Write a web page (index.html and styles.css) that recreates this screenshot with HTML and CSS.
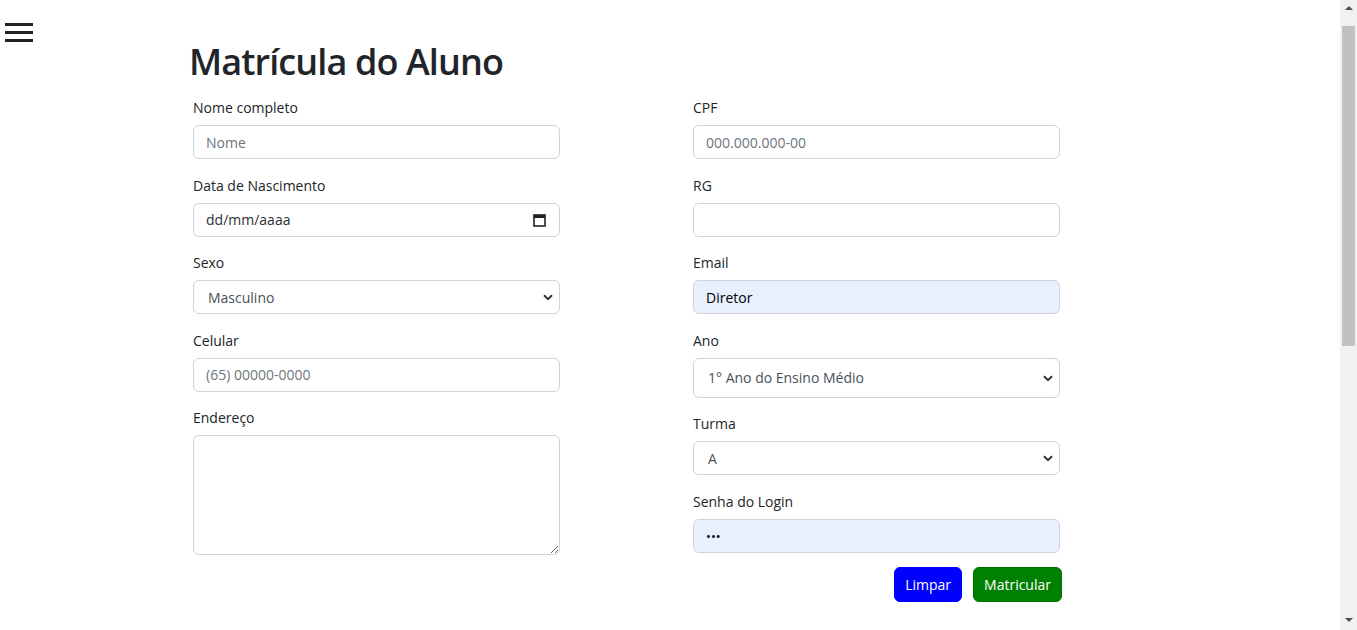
FILE: index.html
```html
<!DOCTYPE html>
<html lang="pt-BR">
<head>
<meta charset="utf-8">
<title>Matrícula do Aluno</title>
<link rel="stylesheet" href="styles.css">
</head>
<body>
<div class="page">
  <aside class="side">
    <button class="menu-btn" type="button" aria-label="Menu">
      <span class="bar"></span><span class="bar"></span><span class="bar"></span>
    </button>
  </aside>
  <main class="main">
    <h1 class="title">Matrícula do Aluno</h1>
    <form class="form">
      <div class="col">
        <div class="group">
          <label class="label">Nome completo</label>
          <input class="control" type="text" placeholder="Nome">
        </div>
        <div class="group">
          <label class="label">Data de Nascimento</label>
          <div class="field">
            <input class="control control-date" type="text" placeholder="dd/mm/aaaa">
            <svg class="cal-icon" width="13" height="14" viewBox="0 0 13 14"><rect x="1" y="2" width="11" height="11" fill="none" stroke="#222" stroke-width="1.6"/><rect x="1" y="2" width="11" height="3" fill="#222"/></svg>
          </div>
        </div>
        <div class="group">
          <label class="label">Sexo</label>
          <div class="field">
            <select class="control select"><option>Masculino</option><option>Feminino</option></select>
            <svg class="chev" width="10" height="7" viewBox="0 0 10 7"><path d="M1 1.2 L5 5.2 L9 1.2" fill="none" stroke="#333" stroke-width="2"/></svg>
          </div>
        </div>
        <div class="group">
          <label class="label">Celular</label>
          <input class="control" type="text" placeholder="(65) 00000-0000">
        </div>
        <div class="group">
          <label class="label">Endereço</label>
          <textarea class="control area"></textarea>
        </div>
      </div>
      <div class="col">
        <div class="group">
          <label class="label">CPF</label>
          <input class="control" type="text" placeholder="000.000.000-00">
        </div>
        <div class="group">
          <label class="label">RG</label>
          <input class="control" type="text">
        </div>
        <div class="group">
          <label class="label">Email</label>
          <input class="control filled" type="text" value="Diretor">
        </div>
        <div class="group">
          <label class="label">Ano</label>
          <div class="field">
            <select class="control select tall"><option>1° Ano do Ensino Médio</option><option>2° Ano do Ensino Médio</option><option>3° Ano do Ensino Médio</option></select>
            <svg class="chev" width="10" height="7" viewBox="0 0 10 7"><path d="M1 1.2 L5 5.2 L9 1.2" fill="none" stroke="#333" stroke-width="2"/></svg>
          </div>
        </div>
        <div class="group">
          <label class="label">Turma</label>
          <div class="field">
            <select class="control select"><option>A</option><option>B</option></select>
            <svg class="chev" width="10" height="7" viewBox="0 0 10 7"><path d="M1 1.2 L5 5.2 L9 1.2" fill="none" stroke="#333" stroke-width="2"/></svg>
          </div>
        </div>
        <div class="group last">
          <label class="label">Senha do Login</label>
          <input class="control filled pass" type="password" value="abc">
        </div>
        <div class="actions">
          <button class="btn btn-blue" type="reset">Limpar</button>
          <button class="btn btn-green" type="submit">Matricular</button>
        </div>
      </div>
    </form>
  </main>
</div>
<div class="scrollbar" aria-hidden="true">
  <div class="sb-arrow sb-up"></div>
  <div class="sb-track"><div class="sb-thumb"></div></div>
  <div class="sb-arrow sb-down"></div>
</div>
</body>
</html>
```

FILE: styles.css
```css
* { box-sizing: border-box; }

html, body {
  margin: 0;
  padding: 0;
  background: #fff;
}

body {
  font-family: "Open Sans", "Noto Sans", sans-serif;
  font-size: 14px;
  color: #212529;
}

.page {
  display: flex;
  align-items: flex-start;
  padding-right: 17px;
}

.side {
  width: 189px;
  flex: 0 0 189px;
  padding: 23px 0 0 5px;
}

.menu-btn {
  display: flex;
  flex-direction: column;
  gap: 5px;
  width: 28px;
  padding: 0;
  border: 0;
  background: none;
  cursor: pointer;
}

.bar {
  display: block;
  width: 28px;
  height: 3px;
  background: #222;
}

.main {
  padding-top: 39px;
}

.title {
  margin: 0 0 12px 0;
  font-size: 36px;
  line-height: 46px;
  font-weight: 600;
  letter-spacing: -0.9px;
  color: #212529;
}

.form {
  display: grid;
  grid-template-columns: 367px 367px;
  column-gap: 133px;
  padding-left: 4px;
}

.col {
  display: flex;
  flex-direction: column;
}

.group {
  display: flex;
  flex-direction: column;
  margin-bottom: 15.6px;
}

.group.last {
  margin-bottom: 14px;
}

.label {
  display: block;
  line-height: 21px;
  margin-bottom: 7px;
  font-size: 14px;
}

.field {
  position: relative;
}

.control {
  display: block;
  width: 100%;
  height: 34px;
  padding: 0 12px;
  font-family: inherit;
  font-size: 14px;
  color: #212529;
  background: #fff;
  border: 1px solid #ced4da;
  border-radius: 6px;
  outline: none;
}

.control::placeholder {
  color: #6c757d;
}

.control-date::placeholder {
  color: #2b2f33;
}

.cal-icon {
  position: absolute;
  right: 14px;
  top: 10px;
}

.select {
  appearance: none;
  -webkit-appearance: none;
  padding-left: 14px;
  color: #495057;
}

.select.tall {
  height: 40px;
}

.chev {
  position: absolute;
  right: 7px;
  top: 50%;
  margin-top: -3px;
  pointer-events: none;
}

.filled {
  background: #e8f0fe;
  color: #000;
}

.pass {
  font-size: 13px;
}

.area {
  height: 120px;
  padding: 6px 12px;
  resize: vertical;
}

.actions {
  display: flex;
  justify-content: flex-end;
  gap: 11px;
  margin-right: -2px;
}

.btn {
  height: 35px;
  padding: 0 10px;
  font-family: inherit;
  font-size: 14px;
  color: #fff;
  border-radius: 6px;
  cursor: pointer;
}

.btn-blue {
  background: #0000ff;
  border: 1px solid #0000ff;
}

.btn-green {
  background: #008000;
  border: 1px solid #007000;
}

/* decorative page scrollbar, drawn over the right edge */
.scrollbar {
  position: fixed;
  top: 0;
  right: 0;
  width: 17px;
  height: 100%;
  background: #f1f1f1;
  display: flex;
  flex-direction: column;
}

.sb-arrow {
  flex: 0 0 17px;
  position: relative;
}

.sb-arrow::after {
  content: "";
  position: absolute;
  left: 5px;
  width: 0;
  height: 0;
  border-left: 4px solid transparent;
  border-right: 4px solid transparent;
}

.sb-up::after {
  top: 6px;
  border-bottom: 4px solid #505050;
}

.sb-down::after {
  top: 5px;
  border-top: 4px solid #505050;
}

.sb-track {
  flex: 1;
  padding: 9px 2px 0 2px;
}

.sb-thumb {
  height: 320px;
  background: #c1c1c1;
}
```
